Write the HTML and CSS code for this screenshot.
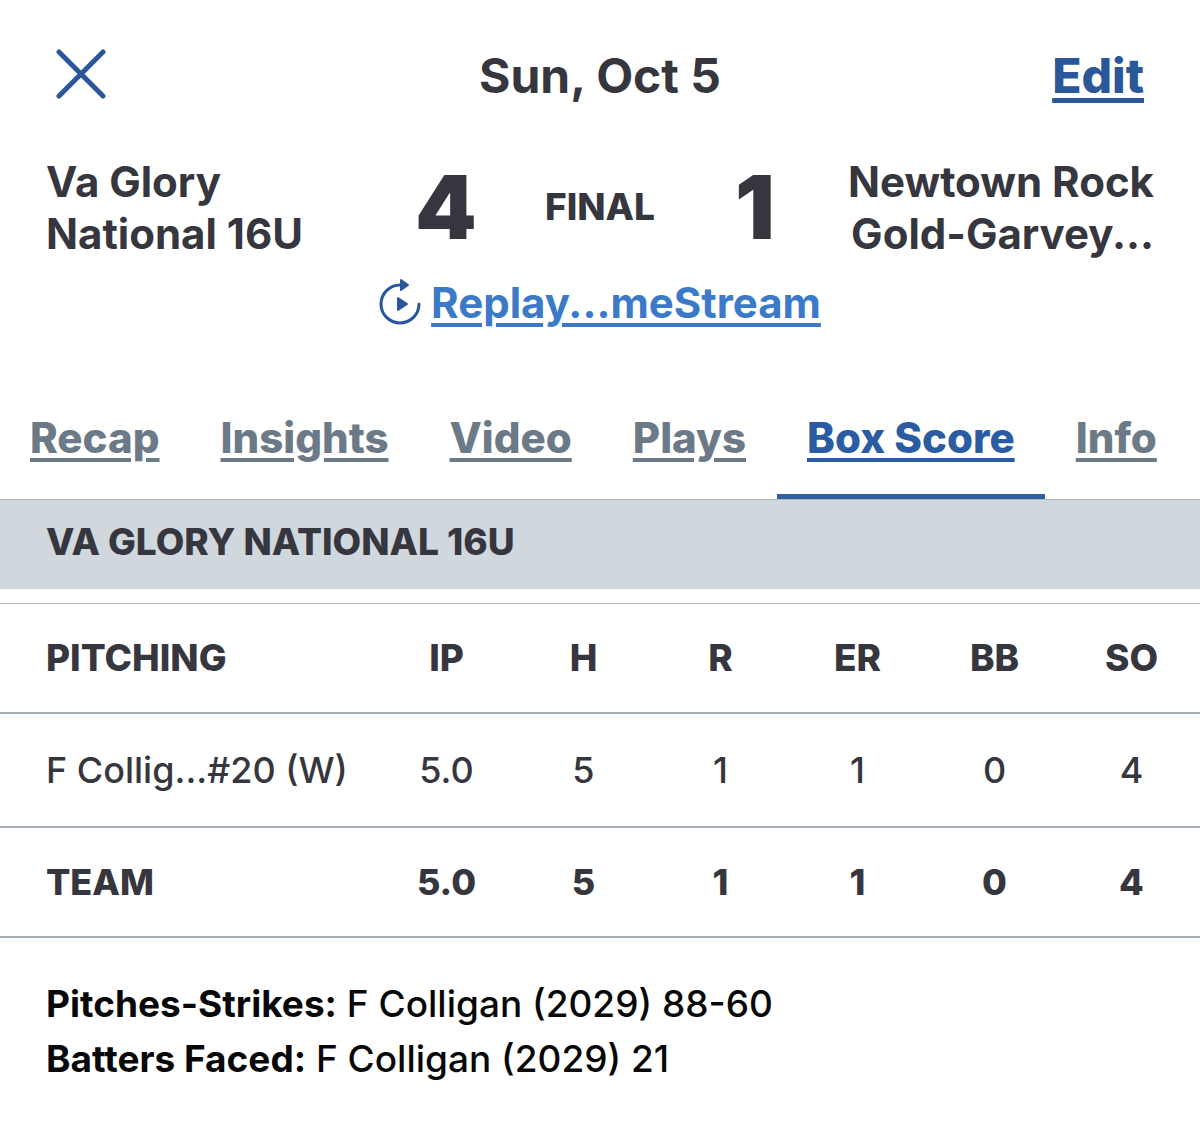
FILE: index.html
```html
<!DOCTYPE html>
<html lang="en">
<head>
<meta charset="utf-8">
<meta name="viewport" content="width=device-width, initial-scale=1">
<title>Box Score</title>
<link rel="stylesheet" href="styles.css">
</head>
<body>
<header class="topbar">
  <button class="close" type="button" aria-label="Close">
    <svg width="50" height="50" viewBox="0 0 50 50" fill="none" stroke="currentColor" stroke-width="5" stroke-linecap="round" aria-hidden="true"><path d="M3 3 47 47M47 3 3 47"/></svg>
  </button>
  <h1 class="date">Sun, Oct 5</h1>
  <a class="edit" href="#edit">Edit</a>
</header>

<section class="scoreboard">
  <p class="team">Va Glory<br>National 16U</p>
  <p class="score">4</p>
  <p class="status">FINAL</p>
  <p class="score">1</p>
  <p class="team team-away">Newtown Rock<br>Gold-Garvey...</p>
</section>

<div class="replay">
  <svg class="replay-icon" width="44" height="50" viewBox="0 0 44 50" aria-hidden="true">
    <path d="M40 26A19 19 0 1 1 21 7" fill="none" stroke="currentColor" stroke-width="3" stroke-linecap="round"/>
    <path d="M22 2v10l7-5zM19 20v12l9-6z" fill="currentColor" stroke="currentColor" stroke-width="2" stroke-linejoin="round"/>
  </svg>
  <a class="replay-link" href="#replay">Replay...meStream</a>
</div>

<nav class="tabs">
  <a class="tab" href="#recap">Recap</a>
  <a class="tab" href="#insights">Insights</a>
  <a class="tab" href="#video">Video</a>
  <a class="tab" href="#plays">Plays</a>
  <a class="tab tab-active" href="#box" aria-current="page">Box Score</a>
  <a class="tab" href="#info">Info</a>
</nav>

<main>
  <h2 class="section-title">VA GLORY NATIONAL 16U</h2>
  <table class="stats">
    <thead>
      <tr><th class="name" scope="col">PITCHING</th><th scope="col">IP</th><th scope="col">H</th><th scope="col">R</th><th scope="col">ER</th><th scope="col">BB</th><th scope="col">SO</th></tr>
    </thead>
    <tbody>
      <tr><td class="name">F Collig...#20 (W)</td><td>5.0</td><td>5</td><td>1</td><td>1</td><td>0</td><td>4</td></tr>
    </tbody>
    <tfoot>
      <tr><th class="name" scope="row">TEAM</th><td>5.0</td><td>5</td><td>1</td><td>1</td><td>0</td><td>4</td></tr>
    </tfoot>
  </table>
  <div class="notes">
    <p><strong>Pitches-Strikes:</strong> F Colligan (2029) 88-60</p>
    <p><strong>Batters Faced:</strong> F Colligan (2029) 21</p>
  </div>
</main>
</body>
</html>
```
FILE: styles.css
```css
* { box-sizing: border-box; }

body {
  margin: 0;
  background: #fff;
  color: #36373e;
  font-family: Inter, "Liberation Sans", sans-serif;
}

h1, h2, p { margin: 0; }

a { text-underline-offset: 5px; text-decoration-thickness: 4px; }

.topbar {
  display: grid;
  grid-template-columns: 1fr auto 1fr;
  align-items: center;
  padding: 48px 56px 0;
}

.close {
  display: flex;
  justify-self: start;
  margin-bottom: 4px;
  padding: 0;
  border: 0;
  background: none;
  color: #2a5799;
}

.date,
.edit {
  font-size: 48px;
  line-height: 56px;
  font-weight: 700;
}

.edit {
  justify-self: end;
  color: #2a5799;
  font-weight: 800;
  text-decoration-thickness: 5px;
}

.scoreboard {
  display: grid;
  grid-template-columns: minmax(0, 1fr) 60px auto 60px minmax(0, 1fr);
  column-gap: 70px;
  align-items: center;
  padding: 52px 46px 0;
}

.team {
  font-size: 42px;
  line-height: 52px;
  font-weight: 700;
  white-space: nowrap;
}

.team-away {
  justify-self: end;
  text-align: right;
}

.score {
  padding-bottom: 3px;
  font-size: 88px;
  line-height: 100px;
  font-weight: 900;
  text-align: center;
}

.status {
  padding-bottom: 2px;
  font-size: 37px;
  line-height: 50px;
  font-weight: 800;
}

.replay {
  display: flex;
  justify-content: center;
  align-items: center;
  gap: 8px;
  padding-top: 18px;
}

.replay-icon { color: #2a5799; }

.replay-link {
  color: #3b7ac8;
  font-size: 42px;
  line-height: 50px;
  font-weight: 700;
}

.tabs {
  display: flex;
  gap: 1px;
  margin-top: 72px;
  border-bottom: 1px solid #b0b5ba;
}

.tab {
  padding: 13px 30px 31px;
  border-bottom: 5px solid transparent;
  color: #6c7a88;
  font-size: 42px;
  line-height: 50px;
  font-weight: 800;
  white-space: nowrap;
}

.tab-active {
  border-bottom-color: #315f9f;
  color: #2a5ba3;
}

.section-title {
  padding: 14px 46px 20px;
  background: #d0d7dd;
  font-size: 37px;
  line-height: 55px;
  font-weight: 800;
}

.stats {
  width: 100%;
  margin-top: 14px;
  border-top: 1px solid #b4b7ba;
  border-spacing: 0;
  table-layout: fixed;
  font-size: 36px;
  line-height: 54px;
}

.stats th,
.stats td {
  width: 137px;
  height: 110px;
  padding: 0;
  border-bottom: 2px solid #a7afb7;
  text-align: center;
  font-weight: 500;
}

.stats tbody td { height: 114px; }

.stats .name {
  width: auto;
  padding-left: 46px;
  text-align: left;
  white-space: nowrap;
}

.stats thead th,
.stats tfoot th,
.stats tfoot td { font-weight: 800; }

.stats thead th { font-size: 37px; }

.notes {
  padding: 38px 46px;
  color: #080808;
  font-size: 37px;
  line-height: 55px;
  font-weight: 500;
}

.notes strong { font-weight: 700; }
```
